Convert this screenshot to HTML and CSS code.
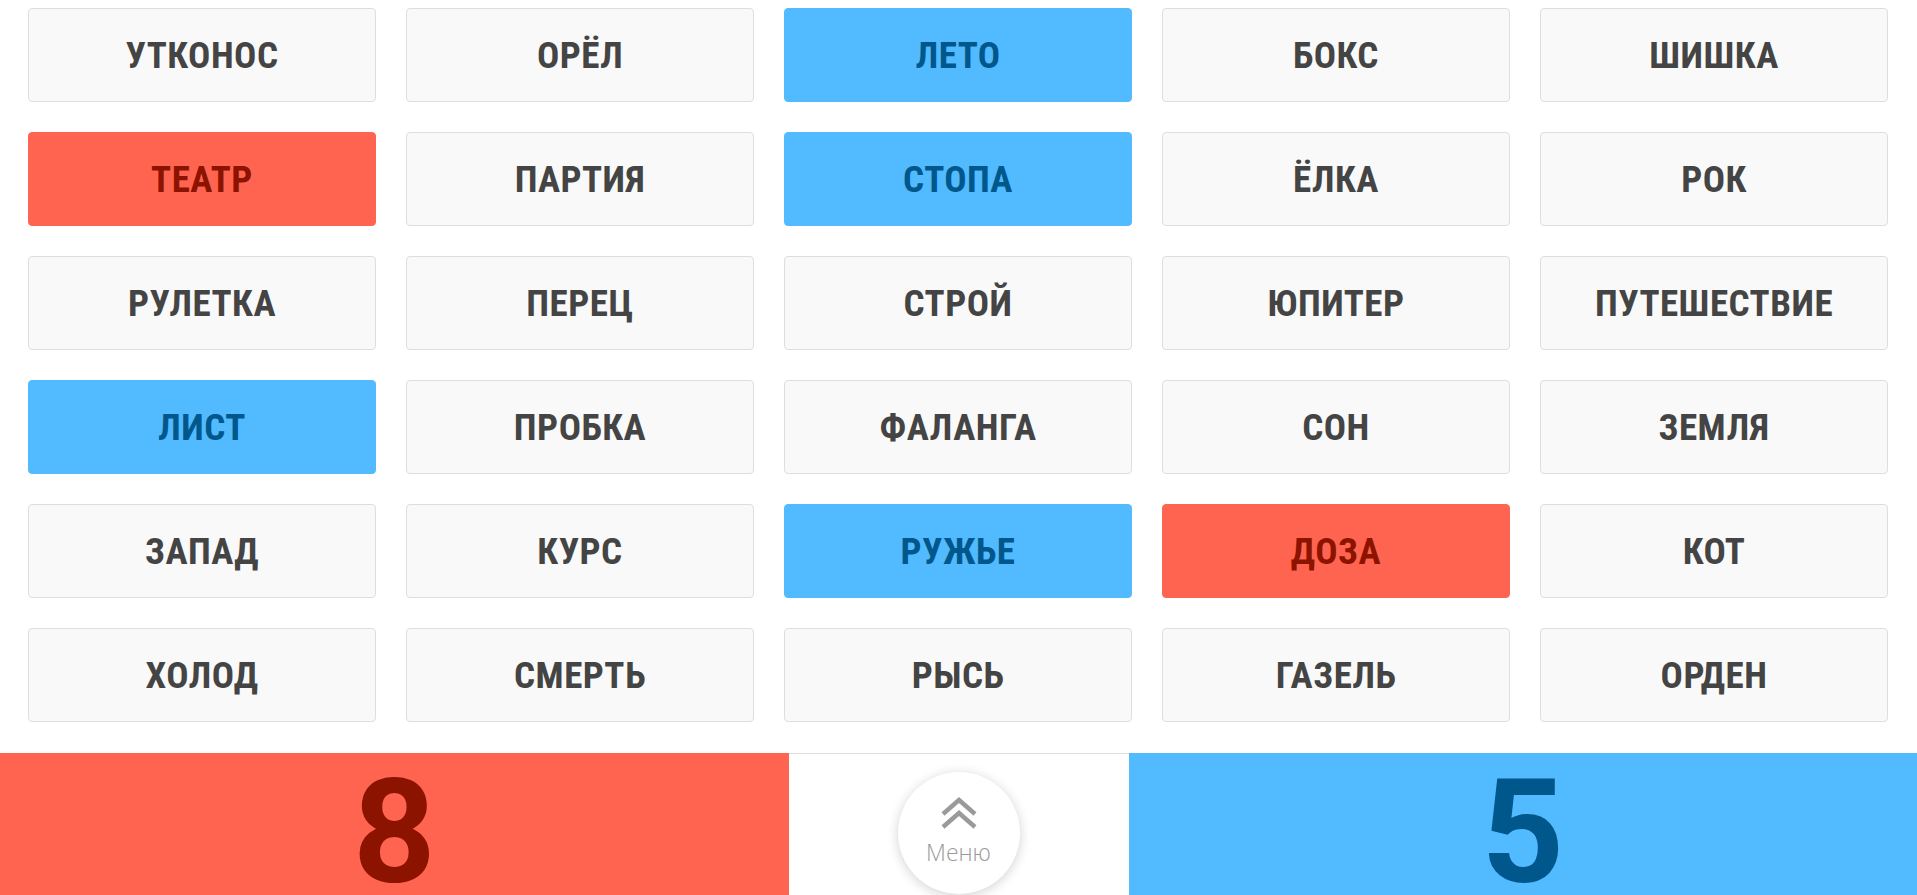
FILE: index.html
```html
<!DOCTYPE html>
<html lang="ru">
<head>
<meta charset="utf-8">
<title>Слова</title>
<link rel="stylesheet" href="styles.css">
</head>
<body>
<main class="board">
  <div class="card">УТКОНОС</div>
  <div class="card">ОРЁЛ</div>
  <div class="card card-blue">ЛЕТО</div>
  <div class="card">БОКС</div>
  <div class="card">ШИШКА</div>

  <div class="card card-red">ТЕАТР</div>
  <div class="card">ПАРТИЯ</div>
  <div class="card card-blue">СТОПА</div>
  <div class="card">ЁЛКА</div>
  <div class="card">РОК</div>

  <div class="card">РУЛЕТКА</div>
  <div class="card">ПЕРЕЦ</div>
  <div class="card">СТРОЙ</div>
  <div class="card">ЮПИТЕР</div>
  <div class="card">ПУТЕШЕСТВИЕ</div>

  <div class="card card-blue">ЛИСТ</div>
  <div class="card">ПРОБКА</div>
  <div class="card">ФАЛАНГА</div>
  <div class="card">СОН</div>
  <div class="card">ЗЕМЛЯ</div>

  <div class="card">ЗАПАД</div>
  <div class="card">КУРС</div>
  <div class="card card-blue">РУЖЬЕ</div>
  <div class="card card-red">ДОЗА</div>
  <div class="card">КОТ</div>

  <div class="card">ХОЛОД</div>
  <div class="card">СМЕРТЬ</div>
  <div class="card">РЫСЬ</div>
  <div class="card">ГАЗЕЛЬ</div>
  <div class="card">ОРДЕН</div>
</main>
<footer class="scorebar">
  <div class="score score-red">8</div>
  <div class="menu-zone">
    <button class="menu-btn" type="button">
      <svg class="menu-icon" width="36" height="34" viewBox="0 0 36 34" aria-hidden="true">
        <path d="M2 17 L18 3 L34 17" fill="none" stroke="#9a9a9a" stroke-width="4.4"/>
        <path d="M2 30 L18 16 L34 30" fill="none" stroke="#9a9a9a" stroke-width="4.4"/>
      </svg>
      <span class="menu-label">Меню</span>
    </button>
  </div>
  <div class="score score-blue">5</div>
</footer>
</body>
</html>
```
FILE: styles.css
```css
html, body {
  margin: 0;
  padding: 0;
  background: #ffffff;
  overflow: hidden;
}

body {
  font-family: "Roboto Condensed", Roboto, "Liberation Sans", sans-serif;
}

.board {
  display: grid;
  grid-template-columns: repeat(5, 1fr);
  grid-auto-rows: 94px;
  gap: 30px;
  padding: 8px 29px 0 28px;
  margin-bottom: 31px;
}

.card {
  display: flex;
  align-items: center;
  justify-content: center;
  background: #f9f9f9;
  border: 1px solid #dedede;
  border-radius: 4px;
  color: #444444;
  font-size: 37px;
  font-weight: 700;
  font-stretch: 87.5%;
  letter-spacing: 0.5px;
}

.card-red {
  background: #ff6450;
  border-color: #ff6450;
  color: #8c1300;
}

.card-blue {
  background: #52baff;
  border-color: #52baff;
  color: #00578c;
}

.scorebar {
  display: grid;
  grid-template-columns: 1fr 340px 1fr;
  height: 142px;
}

.score {
  display: flex;
  justify-content: center;
  padding-top: 20px;
  font-family: Roboto, "Liberation Sans", sans-serif;
  font-size: 144px;
  font-weight: 700;
  font-stretch: 100%;
  line-height: 120px;
}

.score-red {
  background: #ff6450;
  color: #8c1300;
}

.score-blue {
  background: #52baff;
  color: #00578c;
}

.menu-zone {
  display: flex;
  justify-content: center;
  align-items: flex-start;
  border-top: 1px solid #dedede;
  padding-top: 18px;
}

.menu-btn {
  width: 122px;
  height: 122px;
  border-radius: 50%;
  border: none;
  background: #ffffff;
  box-shadow: 0 2px 12px rgba(0, 0, 0, 0.18);
  display: flex;
  flex-direction: column;
  align-items: center;
  padding: 25px 0 0;
  gap: 10px;
}

.menu-icon {
  display: block;
}

.menu-label {
  font-family: "Open Sans", "Noto Sans", sans-serif;
  font-weight: 300;
  font-size: 23px;
  color: #9a9a9a;
  line-height: 1;
}
```
